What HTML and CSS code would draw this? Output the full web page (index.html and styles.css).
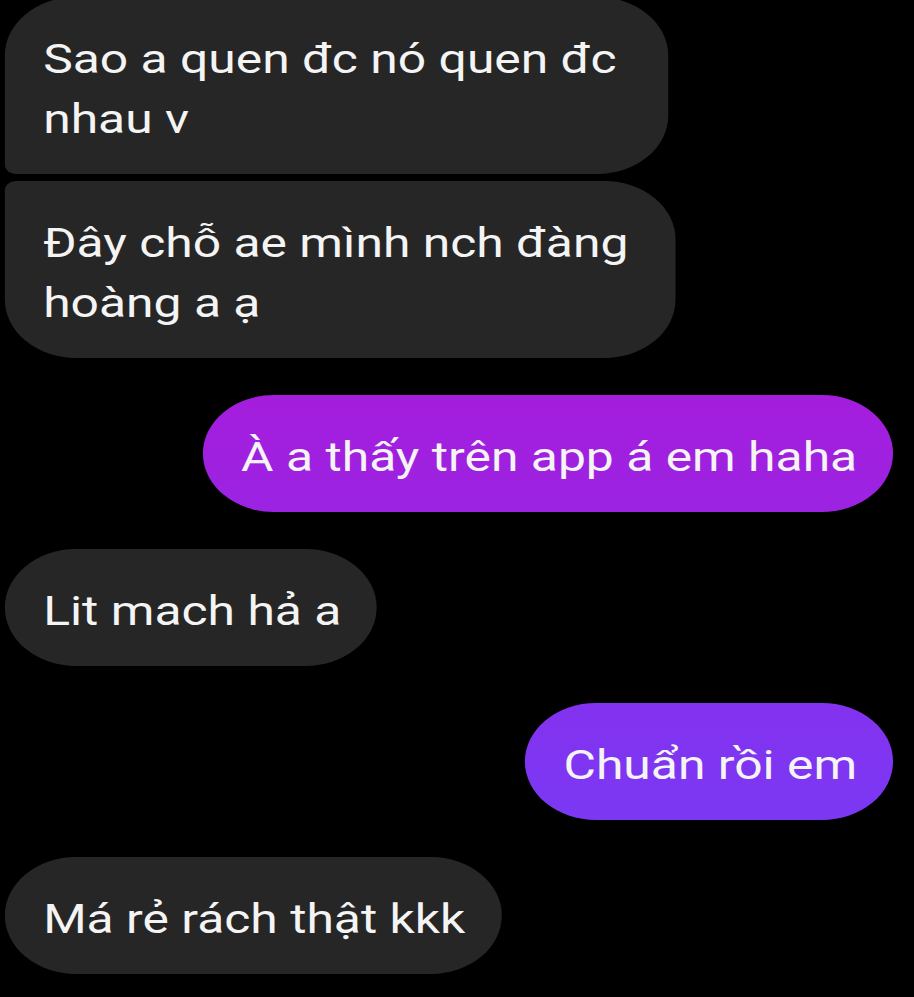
FILE: index.html
```html
<!DOCTYPE html>
<html lang="vi">
<head>
<meta charset="utf-8">
<title>Chat</title>
<link rel="stylesheet" href="styles.css">
</head>
<body>
<main class="stage">
  <div class="group">
    <div class="bubble in first w1">Sao a quen đc nó quen đc<br>nhau v</div>
    <div class="bubble in last w2">Đây chỗ ae mình nch đàng<br>hoàng a ạ</div>
  </div>
  <div class="bubble out out-a">À a thấy trên app á em haha</div>
  <div class="bubble in">Lit mach hả a</div>
  <div class="bubble out out-b">Chuẩn rồi em</div>
  <div class="bubble in">Má rẻ rách thật kkk</div>
</main>
</body>
</html>
```
FILE: styles.css
```css
html, body {
  margin: 0;
  padding: 0;
  background: #000;
  overflow: hidden;
}

.stage {
  width: 752px;
  transform: scaleX(1.215);
  transform-origin: 0 0;
  display: flex;
  flex-direction: column;
  gap: 37px;
  margin-top: -3px;
  font-family: Roboto, "Noto Sans", sans-serif;
}

.group {
  display: flex;
  flex-direction: column;
  gap: 7px;
  align-items: flex-start;
}

.bubble {
  box-sizing: border-box;
  font-size: 41px;
  line-height: 60px;
  padding: 32px 29.5px 25px 31.5px;
  border-radius: 58.5px;
  color: #f4f4f4;
  white-space: nowrap;
}

.in {
  align-self: flex-start;
  margin-left: 4px;
  background: #262626;
}

.in.first {
  border-bottom-left-radius: 9px;
}

.in.last {
  border-top-left-radius: 9px;
}

.w1 { width: 546px; }
.w2 { width: 552px; }

.out {
  align-self: flex-end;
  margin-right: 17px;
}

.out-a {
  background: linear-gradient(180deg, #a51ddd 0%, #9c23e2 100%);
}

.out-b {
  background: linear-gradient(180deg, #8332ef 0%, #7b38f3 100%);
}
```
